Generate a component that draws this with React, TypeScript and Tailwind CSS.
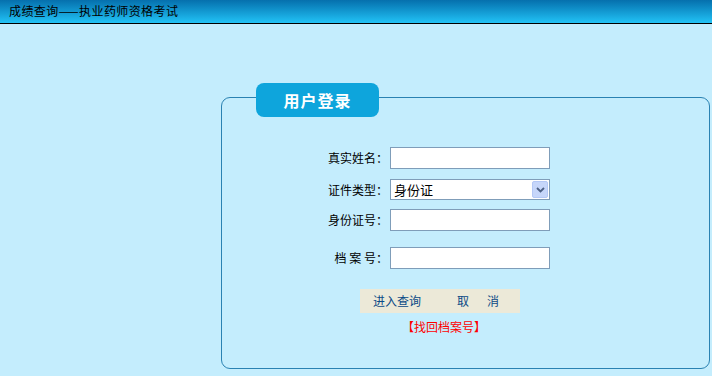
import React, { useState } from 'react';

const font = "font-['SimSun','Noto_Sans_CJK_SC',sans-serif]";

const Field: React.FC<{ label: string; className?: string; children: React.ReactNode }> = ({ label, className, children }) => (
    <div className={`flex items-center pl-[67px] ${className ?? ''}`}>
        <label className="w-[101px] pr-[2px] text-right text-[12px] text-black whitespace-pre">{label}</label>
        {children}
    </div>
);

const App: React.FC = () => {
    const [form, setForm] = useState({ name: '', idType: '身份证', idNo: '', fileNo: '' });

    const handleChange = (e: React.ChangeEvent<HTMLInputElement | HTMLSelectElement>) => {
        const { name, value } = e.target;
        setForm(prev => ({ ...prev, [name]: value }));
    };

    const inputCls = "w-[160px] h-[22px] bg-white border border-[#7f9db9] px-1 text-[13px] outline-none";

    return (
        <div className={`h-[376px] w-full bg-[#c4edfd] overflow-hidden ${font}`}>
            {/* top bar */}
            <div className="h-[24px] border-b border-black bg-gradient-to-b from-[#0670ad] to-[#22c3f6] pl-[9px] text-[12px] leading-[22px] tracking-[0.4px] text-black">
                成绩查询——执业药师资格考试
            </div>

            {/* login box */}
            <div className="relative ml-[221px] mt-[73px] h-[272px] w-[489px] rounded-[9px] border border-[#2a82b2]">
                <div className="absolute left-[34px] -top-[15px] flex h-[34px] w-[123px] items-center justify-center rounded-[8px] bg-[#0ea5dc] text-[16px] font-bold tracking-[1px] text-white">
                    用户登录
                </div>

                <div className="pt-[49px]">
                    <Field label="真实姓名：">
                        <input name="name" value={form.name} onChange={handleChange} className={inputCls} />
                    </Field>
                    <Field label="证件类型：" className="mt-[10px]">
                        <div className="relative flex h-[21px] w-[160px] items-center border border-[#7f9db9] bg-white">
                            <span className="pl-[3px] text-[13px] leading-none text-black">{form.idType}</span>
                            <span className="absolute right-[1px] top-[1px] flex h-[17px] w-[16px] items-center justify-center rounded-[2px] border border-[#b4c8f6] bg-[#c6d6fa]">
                                <svg width="9" height="6" viewBox="0 0 9 6">
                                    <path d="M1 1 L4.5 4.5 L8 1" fill="none" stroke="#4d6185" strokeWidth="1.8" />
                                </svg>
                            </span>
                        </div>
                    </Field>
                    <Field label="身份证号：" className="mt-[9px]">
                        <input name="idNo" value={form.idNo} onChange={handleChange} className={inputCls} />
                    </Field>
                    <Field label="档 案 号：" className="mt-[16px]">
                        <input name="fileNo" value={form.fileNo} onChange={handleChange} className={inputCls} />
                    </Field>

                    <div className="mt-[20px] ml-[138px] flex h-[24px] w-[160px] items-center bg-[#ece9d8] text-[12px] text-[#0b4a86]">
                        <button type="button" className="ml-[13px] cursor-pointer">进入查询</button>
                        <button type="button" className="ml-[36px] flex cursor-pointer gap-[18px]">
                            <span>取</span>
                            <span>消</span>
                        </button>
                    </div>

                    <div className="mt-[6px] ml-[180px] text-[12px] leading-[16px] text-[#ff0000]">
                        【找回档案号】
                    </div>
                </div>
            </div>
        </div>
    );
};

export default App;
